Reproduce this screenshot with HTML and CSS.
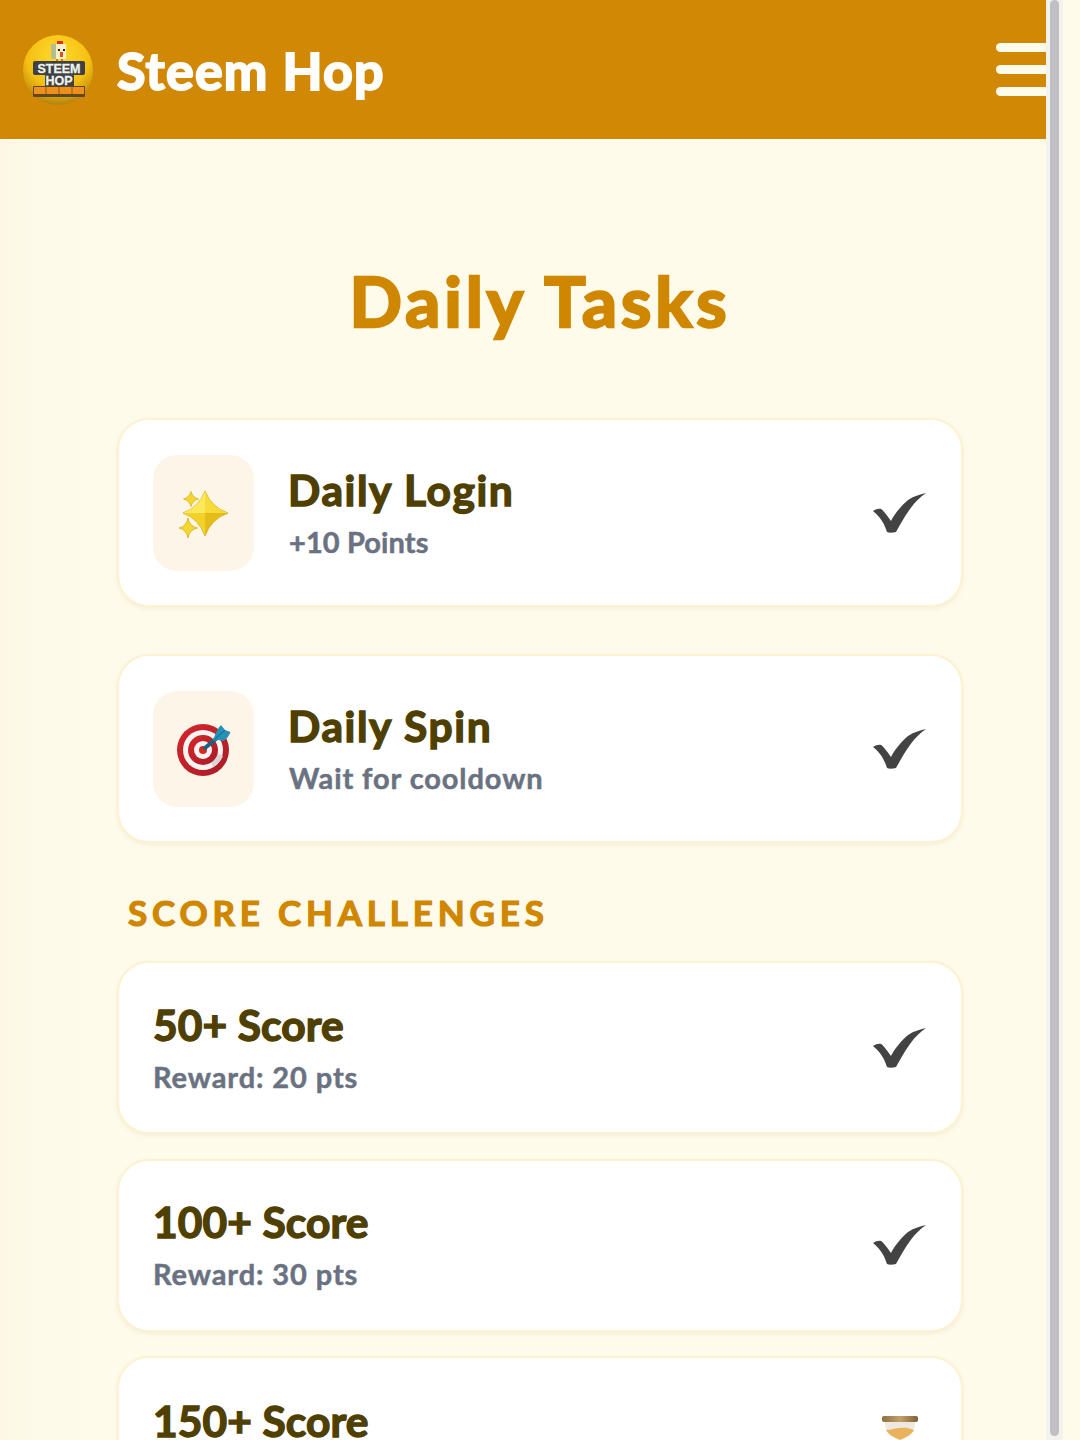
FILE: index.html

```html
<!DOCTYPE html>
<html lang="en">
<head>
  <meta charset="UTF-8" />
  <meta name="viewport" content="width=device-width, initial-scale=1.0"/>
  <title>Daily Tasks - Steem Hop</title>
  <link rel="stylesheet" href="styles.css">
</head>
<body>
  <svg class="defs" width="0" height="0">
    <defs>
      <symbol id="check" viewBox="0 0 54 40">
        <path d="M0 18C3 16 6 15.5 8 16C10 17 13 21 18 28C22 20 29 12 35 7C41 3 48 1 53 0C47 4 42 9 37 16C31 24 27 32 23 39C19 40 16 40 14 39C12 33 9 25 0 18Z" fill="#434343"/>
      </symbol>
    </defs>
  </svg>

  <div class="screen">
    <div class="page">
      <header class="topbar">
        <div class="brand">
          <svg class="logo" viewBox="0 0 70 70">
            <defs>
              <radialGradient id="ball" cx="50%" cy="30%" r="75%">
                <stop offset="0" stop-color="#ffdc2e"/>
                <stop offset=".6" stop-color="#f5bf12"/>
                <stop offset=".85" stop-color="#c8930f"/>
                <stop offset="1" stop-color="#9c7412"/>
              </radialGradient>
            </defs>
            <circle cx="35" cy="35" r="35" fill="url(#ball)"/>
            <rect x="34" y="6" width="6" height="3" fill="#d8341c"/>
            <rect x="28" y="9" width="15" height="15" rx="1" fill="#f6efc8"/>
            <rect x="28" y="9" width="5" height="15" fill="#b9bd8e"/>
            <rect x="35" y="14" width="2" height="2" fill="#222"/>
            <rect x="40" y="14" width="2" height="2" fill="#222"/>
            <rect x="37" y="17" width="3" height="5" fill="#d8541c"/>
            <rect x="33" y="24" width="2" height="3" fill="#d87a1c"/>
            <rect x="38" y="24" width="2" height="3" fill="#d87a1c"/>
            <rect x="10" y="26" width="52" height="14" rx="2" fill="#3d4044"/>
            <rect x="22" y="39" width="29" height="15" rx="2" fill="#3d4044"/>
            <rect x="10" y="51" width="52" height="11" rx="1" fill="#5e4a22"/>
            <rect x="11" y="52" width="50" height="7" fill="#f0901c"/>
            <path d="M23 52v7M36 52v7M49 52v7" stroke="#96590f" stroke-width="1"/>
            <text class="logo-text" x="36" y="38" text-anchor="middle">STEEM</text>
            <text class="logo-text" x="36" y="50" text-anchor="middle">HOP</text>
          </svg>
          <span class="brand-name">Steem Hop</span>
        </div>
        <div class="burger"><span></span><span></span><span></span></div>
      </header>

      <main class="content">
        <h1 class="page-title">Daily Tasks</h1>

        <section class="daily-list">
          <div class="card card-daily">
            <div class="icon-box">
              <svg class="sparkle" viewBox="0 -3 49 50">
                <path d="M26 0Q20 16 4 22Q20 28 26 45Q32 28 49 22Q32 16 26 0Z" fill="#d9ab14" stroke="#d3a716" stroke-width=".8"/>
                <path d="M26 0Q20 16 4 22H26Z" fill="#fbe95a"/>
                <path d="M26 0Q32 16 49 22H26Z" fill="#f6dc3a"/>
                <path d="M4 22Q20 28 26 45V22Z" fill="#f2d22a"/>
                <path d="M49 22Q32 28 26 45V22Z" fill="#e6bd18"/>
                <path d="M12 .5Q10.5 6.5 4.5 8Q10.5 9.5 12 15.5Q13.5 9.5 19.5 8Q13.5 6.5 12 .5Z" fill="#f4d72e" stroke="#d3a716" stroke-width=".7"/>
                <path d="M9 27Q7.5 35.5 0 37Q7.5 38.5 9 47Q10.5 38.5 18.5 37Q10.5 35.5 9 27Z" fill="#f4d72e" stroke="#d3a716" stroke-width=".7"/>
              </svg>
            </div>
            <div class="card-text">
              <h3 class="card-title">Daily Login</h3>
              <p class="card-sub card-sub-tight">+10 Points</p>
            </div>
            <svg class="check"><use href="#check"/></svg>
          </div>

          <div class="card card-daily">
            <div class="icon-box">
              <svg class="target" viewBox="0 0 54 54">
                <defs>
                  <linearGradient id="ring" x1="0" y1="0" x2="1" y2="1">
                    <stop offset="0" stop-color="#d6262c"/>
                    <stop offset="1" stop-color="#a81c28"/>
                  </linearGradient>
                </defs>
                <circle cx="26" cy="28" r="26" fill="url(#ring)"/>
                <circle cx="26" cy="28" r="20" fill="#f8f4f2"/>
                <path d="M29 26L46 34A20 20 0 0 1 36 45Z" fill="#d9d6d4"/>
                <circle cx="26" cy="28" r="15" fill="url(#ring)"/>
                <circle cx="26" cy="28" r="9" fill="#f8f4f2"/>
                <circle cx="26" cy="28" r="4" fill="#d92a20"/>
                <path d="M28 26L40 16" stroke="#1c6080" stroke-width="4" stroke-linecap="round"/>
                <path d="M36 19C38 12 41 6 44 3L48 8L53.5 10C52 14 49 18 46 19L42 18Z" fill="#2691b5"/>
                <path d="M38 17L48 8" stroke="#176a8c" stroke-width="1"/>
              </svg>
            </div>
            <div class="card-text">
              <h3 class="card-title">Daily Spin</h3>
              <p class="card-sub">Wait for cooldown</p>
            </div>
            <svg class="check"><use href="#check"/></svg>
          </div>
        </section>

        <h2 class="section-title">SCORE CHALLENGES</h2>

        <section class="score-list">
          <div class="card card-score">
            <div class="card-text">
              <h3 class="card-title">50+ Score</h3>
              <p class="card-sub">Reward: 20 pts</p>
            </div>
            <svg class="check"><use href="#check"/></svg>
          </div>
          <div class="card card-score">
            <div class="card-text">
              <h3 class="card-title">100+ Score</h3>
              <p class="card-sub">Reward: 30 pts</p>
            </div>
            <svg class="check"><use href="#check"/></svg>
          </div>
          <div class="card card-score">
            <div class="card-text card-text-top">
              <h3 class="card-title">150+ Score</h3>
            </div>
            <svg class="hourglass" viewBox="0 0 36 46">
              <defs>
                <linearGradient id="cap" x1="0" y1="0" x2="1" y2="0">
                  <stop offset="0" stop-color="#8d6f3f"/>
                  <stop offset=".5" stop-color="#c2a06a"/>
                  <stop offset="1" stop-color="#7d6236"/>
                </linearGradient>
              </defs>
              <rect x="0" y="0" width="36" height="6" rx="2" fill="url(#cap)"/>
              <path d="M3 6H33C33 16 28 21 18 24C8 21 3 16 3 6Z" fill="#eee9e0"/>
              <path d="M4 14C12 14 20 9 32 14C30 18 25 21 18 24C11 21 6 18 4 14Z" fill="#eab25c"/>
            </svg>
          </div>
        </section>
      </main>
    </div>

    <div class="scroll-rail"><div class="scroll-thumb"></div></div>
  </div>
</body>
</html>
```

FILE: styles.css

```css
* {
  box-sizing: border-box;
}
html, body {
  margin: 0;
  height: 1440px;
  overflow: hidden;
}
body {
  font-family: 'Lato', 'Noto Sans', sans-serif;
  background-color: #fffbeb;
}
.defs {
  display: block;
  height: 0;
}
.screen {
  display: flex;
  height: 1440px;
  overflow: hidden;
}
.page {
  width: 1046px;
  flex-shrink: 0;
  background: linear-gradient(90deg, #fdf8e6, #fffbeb 110px);
}
.scroll-rail {
  width: 17px;
  height: 1440px;
  padding: 0 4px;
  background-color: #f3f2ec;
}
.scroll-thumb {
  width: 9px;
  height: 1436px;
  border-radius: 5px;
  background-color: #c0c0c4;
}

/* header */
.topbar {
  height: 139px;
  padding-left: 23px;
  background-color: #d18905;
  display: flex;
  justify-content: space-between;
  align-items: center;
}
.brand {
  display: flex;
  align-items: center;
  gap: 24px;
}
.logo {
  width: 70px;
  height: 70px;
}
.logo-text {
  font-family: 'Liberation Sans', sans-serif;
  font-weight: 700;
  font-size: 12.5px;
  fill: #f2f2ea;
  stroke: #f2f2ea;
  stroke-width: .3px;
}
.brand-name {
  color: #fff;
  font-size: 52px;
  font-weight: 700;
  letter-spacing: 1.2px;
  -webkit-text-stroke: 2px #fff;
}
.burger {
  width: 50px;
  display: flex;
  flex-direction: column;
  gap: 13px;
}
.burger span {
  height: 9px;
  border-radius: 5px 0 0 5px;
  background-color: #fffbeb;
}

/* content */
.content {
  padding: 0 83px 0 117px;
}
.page-title {
  margin: 117px 0 72px;
  color: #d08700;
  font-size: 69px;
  font-weight: 700;
  letter-spacing: 4px;
  line-height: 90px;
  text-align: center;
  -webkit-text-stroke: 2.5px #d08700;
}
.daily-list {
  display: flex;
  flex-direction: column;
  gap: 47px;
}
.score-list {
  display: flex;
  flex-direction: column;
  gap: 24.5px;
}
.card {
  background-color: #fff;
  border: 2px solid #fdf2cf;
  border-radius: 32px;
  box-shadow: 0 2px 5px rgba(120, 90, 0, 0.08);
  display: flex;
  align-items: center;
  padding: 0 34px 0 34px;
}
.card-daily {
  height: 189px;
  gap: 35px;
}
.card-score {
  height: 173px;
}
.icon-box {
  width: 101px;
  height: 116px;
  flex-shrink: 0;
  border-radius: 24px;
  background-color: #fdf6e8;
  display: flex;
  align-items: center;
  justify-content: center;
}
.sparkle {
  width: 49px;
  height: 50px;
}
.target {
  width: 54px;
  height: 54px;
}
.card-text {
  flex: 1;
}
.card-text-top {
  align-self: flex-start;
  margin-top: 37px;
}
.card-title {
  margin: 0;
  color: #4f3f00;
  font-size: 42.5px;
  font-weight: 700;
  letter-spacing: .1px;
  line-height: 52px;
  -webkit-text-stroke: 1.4px #4f3f00;
}
.card-daily .card-title {
  letter-spacing: 1.6px;
  margin-left: -1px;
}
.card-sub {
  margin: 6px 0 0;
  color: #6a7282;
  font-size: 29px;
  font-weight: 700;
  letter-spacing: .9px;
  line-height: 40px;
  -webkit-text-stroke: .5px #6a7282;
}
.card-sub-tight {
  letter-spacing: .1px;
}
.check {
  width: 54px;
  height: 40px;
  flex-shrink: 0;
}
.hourglass {
  width: 36px;
  height: 46px;
  margin-right: 9px;
  margin-top: 58px;
  flex-shrink: 0;
  align-self: flex-start;
}
.section-title {
  margin: 47px 0 27px 11px;
  color: #d08700;
  font-size: 35px;
  font-weight: 700;
  letter-spacing: 4.8px;
  line-height: 44px;
  -webkit-text-stroke: 1.2px #d08700;
}
```
